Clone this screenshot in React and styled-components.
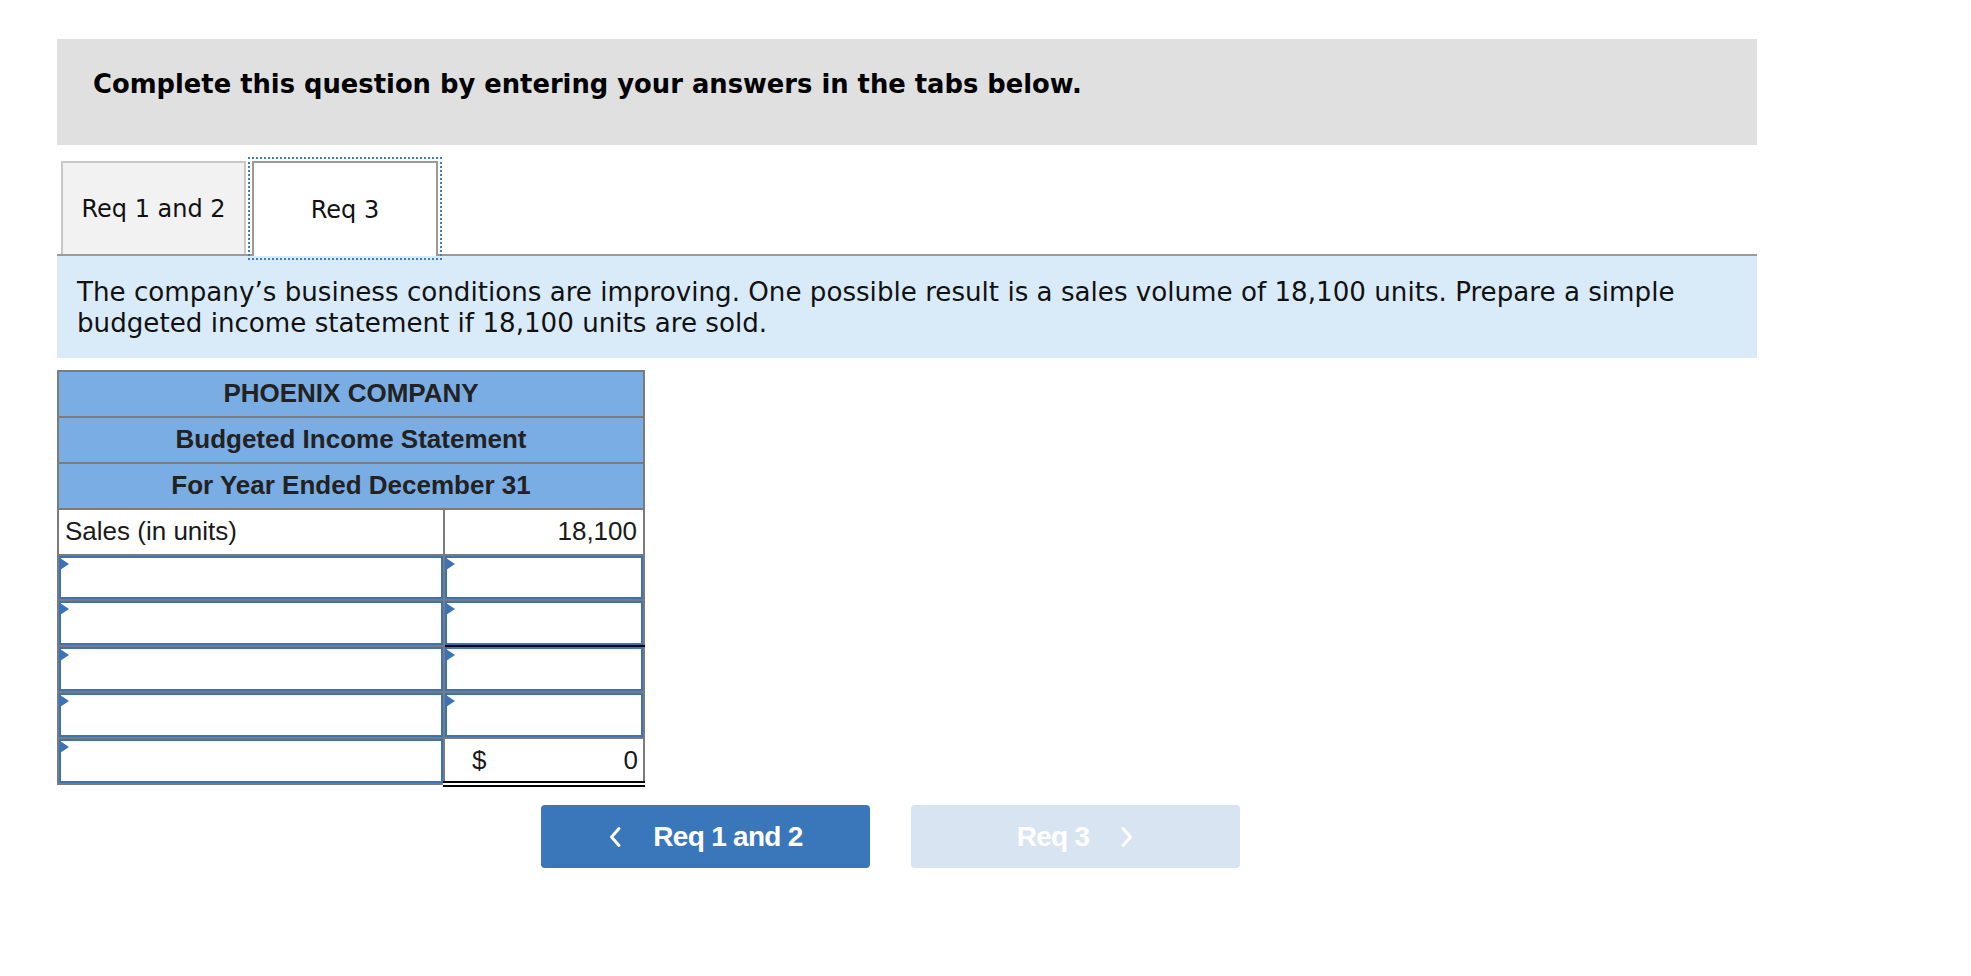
import React from 'react';
import styled, { createGlobalStyle } from 'styled-components';

const Global = createGlobalStyle`
  html, body { margin: 0; padding: 0; background: #ffffff; }
  body { font-family: "DejaVu Sans", Verdana, sans-serif; color: #000; }
  * { box-sizing: border-box; }
`;

const Page = styled.div`
  padding: 39px 0 40px 57px;
  width: 1757px;
`;

const Banner = styled.div`
  background: #e0e0e0;
  height: 106px;
  padding: 30px 0 0 36px;
  font-weight: bold;
  font-size: 25.8px;
  line-height: 30px;
`;

const TabBar = styled.div`
  display: flex;
  align-items: flex-end;
  gap: 6px;
  margin-top: 16px;
  padding-left: 4px;
  border-bottom: 2px solid #9a9a9a;
  height: 95px;
`;

const Tab = styled.div`
  display: flex;
  align-items: center;
  justify-content: center;
  height: ${p => (p.$active ? '95px' : '93px')};
  width: ${p => (p.$active ? '186px' : '185px')};
  margin-bottom: ${p => (p.$active ? '-2px' : '0')};
  background: ${p => (p.$active ? '#ffffff' : '#f2f2f2')};
  border: 2px solid ${p => (p.$active ? '#9a9a9a' : '#c8c8c8')};
  border-bottom: ${p => (p.$active ? 'none' : '0')};
  outline: ${p => (p.$active ? '2px dotted #3d7cc9' : 'none')};
  outline-offset: 2px;
  font-size: 24px;
  color: #111;
  position: relative;
`;

const Prompt = styled.div`
  background: #d9ebf9;
  padding: 21px 20px 19px 20px;
  font-size: 26.15px;
  line-height: 31px;
  color: #111;
`;

const Sheet = styled.table`
  margin-top: 12px;
  border-collapse: collapse;
  border: 2px solid #7b7b7b;
  width: 586px;
  font-family: "Liberation Sans", Arial, sans-serif;
  font-size: 26px;
  color: #1a1a1a;
  table-layout: fixed;
`;

const HeadCell = styled.th`
  background: #7aade4;
  border: 2px solid #7b7b7b;
  height: 45.9px;
  padding: 0;
  font-weight: bold;
  text-align: center;
  color: #222;
`;

const Cell = styled.td`
  border: 2px solid #7b7b7b;
  border-top-color: ${p => (p.$topRule ? '#000' : '#7b7b7b')};
  border-bottom: ${p => (p.$double ? '6px double #000' : p.$bottomRule ? '2px solid #000' : '2px solid #7b7b7b')};
  height: 45.9px;
  padding: ${p => (p.$text ? '0 6px 0 6px' : '0')};
  text-align: ${p => (p.$right ? 'right' : 'left')};
  vertical-align: middle;
  background: #fff;
`;

const InputBox = styled.div`
  position: relative;
  height: 43.9px;
  border: 2px solid #3b73b9;
  background: #fff;
  &::before {
    content: '';
    position: absolute;
    top: 0;
    left: -1px;
    border-left: 9px solid #3b73b9;
    border-top: 6px solid transparent;
    border-bottom: 6px solid transparent;
  }
`;

const TotalLine = styled.div`
  display: flex;
  justify-content: space-between;
  align-items: center;
  padding: 0 5px 0 27px;
`;

const NavRow = styled.div`
  display: flex;
  gap: 41px;
  margin-top: 18px;
  padding-left: 484px;
`;

const NavButton = styled.button`
  width: 329px;
  height: 63px;
  border: none;
  border-radius: 4px;
  background: ${p => (p.$disabled ? '#d8e4f1' : '#3a76ba')};
  color: #ffffff;
  display: flex;
  align-items: center;
  justify-content: center;
  gap: 31px;
  font-family: "Liberation Sans", Arial, sans-serif;
  font-weight: bold;
  font-size: 28px;
  letter-spacing: -0.7px;
  padding: 0;
  cursor: ${p => (p.$disabled ? 'default' : 'pointer')};
`;

const Chevron = ({ dir }) => (
  <svg width="14" height="22" viewBox="0 0 14 22" fill="none">
    <polyline
      points={dir === 'left' ? '11,2.5 3.5,11 11,19.5' : '3,2.5 10.5,11 3,19.5'}
      stroke="#ffffff"
      strokeWidth="3"
      strokeLinecap="round"
      strokeLinejoin="round"
    />
  </svg>
);

const entryRows = [
  { bottomRule: false },
  { bottomRule: true },
  { bottomRule: false },
  { bottomRule: false },
];

export default function App() {
  return (
    <>
      <Global />
      <Page>
        <Banner>Complete this question by entering your answers in the tabs below.</Banner>
        <TabBar>
          <Tab>Req 1 and 2</Tab>
          <Tab $active>Req 3</Tab>
        </TabBar>
        <Prompt>
          The company’s business conditions are improving. One possible result is a sales volume of 18,100 units. Prepare a simple budgeted income statement if 18,100 units are sold.
        </Prompt>
        <Sheet>
          <colgroup>
            <col style={{ width: '386px' }} />
            <col style={{ width: '200px' }} />
          </colgroup>
          <thead>
            <tr><HeadCell colSpan={2}>PHOENIX COMPANY</HeadCell></tr>
            <tr><HeadCell colSpan={2}>Budgeted Income Statement</HeadCell></tr>
            <tr><HeadCell colSpan={2}>For Year Ended December 31</HeadCell></tr>
          </thead>
          <tbody>
            <tr>
              <Cell $text>Sales (in units)</Cell>
              <Cell $text $right>18,100</Cell>
            </tr>
            {entryRows.map((r, i) => (
              <tr key={i}>
                <Cell><InputBox /></Cell>
                <Cell $bottomRule={r.bottomRule}><InputBox /></Cell>
              </tr>
            ))}
            <tr>
              <Cell><InputBox /></Cell>
              <Cell $topRule $double>
                <TotalLine><span>$</span><span>0</span></TotalLine>
              </Cell>
            </tr>
          </tbody>
        </Sheet>
        <NavRow>
          <NavButton>
            <Chevron dir="left" />
            <span>Req 1 and 2</span>
          </NavButton>
          <NavButton $disabled>
            <span>Req 3</span>
            <Chevron dir="right" />
          </NavButton>
        </NavRow>
      </Page>
    </>
  );
}
